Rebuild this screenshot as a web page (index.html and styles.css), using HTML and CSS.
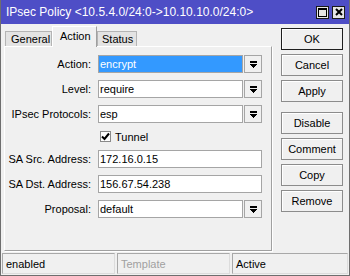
FILE: index.html
```html
<!DOCTYPE html>
<html>
<head>
<meta charset="utf-8">
<link rel="stylesheet" href="styles.css">
</head>
<body>
<div class="win">
  <div class="titlebar">
    <span class="title">IPsec Policy &lt;10.5.4.0/24:0-&gt;10.10.10.0/24:0&gt;</span>
    <div class="tbtns">
      <span class="tbtn"><svg width="9" height="9" viewBox="0 0 9 9" shape-rendering="crispEdges"><path d="M0 0h9v9H0z M1 2v6h7V2z" fill="#000" fill-rule="evenodd"/></svg></span>
      <span class="tbtn"><svg width="8" height="8" viewBox="0 0 8 8"><path d="M1 1L7 7M7 1L1 7" stroke="#000" stroke-width="2"/></svg></span>
    </div>
  </div>
  <div class="main">
    <div class="left">
      <div class="tabs">
        <div class="tab t-general">General</div>
        <div class="tab t-action active">Action</div>
        <div class="tab t-status">Status</div>
      </div>
      <div class="panel">
        <div class="form">
          <div class="lbl">Action:</div>
          <div class="combo"><div class="field sel">encrypt</div><div class="dd"><svg width="7" height="7" viewBox="0 0 7 7" shape-rendering="crispEdges"><path d="M0 0h7v2H0z M0 3h7v1H0z M1 4h5v1H1z M2 5h3v1H2z M3 6h1v1H3z" fill="#000"/></svg></div></div>
          <div class="lbl">Level:</div>
          <div class="combo"><div class="field">require</div><div class="dd"><svg width="7" height="7" viewBox="0 0 7 7" shape-rendering="crispEdges"><path d="M0 0h7v2H0z M0 3h7v1H0z M1 4h5v1H1z M2 5h3v1H2z M3 6h1v1H3z" fill="#000"/></svg></div></div>
          <div class="lbl">IPsec Protocols:</div>
          <div class="combo"><div class="field">esp</div><div class="dd"><svg width="7" height="7" viewBox="0 0 7 7" shape-rendering="crispEdges"><path d="M0 0h7v2H0z M0 3h7v1H0z M1 4h5v1H1z M2 5h3v1H2z M3 6h1v1H3z" fill="#000"/></svg></div></div>
          <div class="lbl"></div>
          <div class="check"><span class="box"><svg width="9" height="9" viewBox="0 0 9 9"><path d="M1 4.5L3.5 7L8 1.5" fill="none" stroke="#000" stroke-width="2"/></svg></span><span>Tunnel</span></div>
          <div class="lbl">SA Src. Address:</div>
          <div class="field">172.16.0.15</div>
          <div class="lbl">SA Dst. Address:</div>
          <div class="field">156.67.54.238</div>
          <div class="lbl">Proposal:</div>
          <div class="combo"><div class="field">default</div><div class="dd"><svg width="7" height="7" viewBox="0 0 7 7" shape-rendering="crispEdges"><path d="M0 0h7v2H0z M0 3h7v1H0z M1 4h5v1H1z M2 5h3v1H2z M3 6h1v1H3z" fill="#000"/></svg></div></div>
        </div>
      </div>
    </div>
    <div class="buttons">
      <div class="btn ok">OK</div>
      <div class="btn">Cancel</div>
      <div class="btn">Apply</div>
      <div class="btn gap">Disable</div>
      <div class="btn">Comment</div>
      <div class="btn">Copy</div>
      <div class="btn">Remove</div>
    </div>
  </div>
  <div class="statusbar">
    <div class="cell c1">enabled</div>
    <div class="cell c2 dim">Template</div>
    <div class="cell c3">Active</div>
  </div>
</div>
</body>
</html>
```

FILE: styles.css
```css
* { box-sizing: border-box; }
html, body { margin: 0; padding: 0; }
body {
  font-family: "Liberation Sans", Arial, sans-serif;
  font-size: 11px;
  color: #000;
  background: #f0f0f0;
}
.win {
  width: 350px;
  height: 276px;
  background: #f0f0f0;
  border: 1px solid #6e6e6e;
  border-top: none;
  display: flex;
  flex-direction: column;
  overflow: hidden;
}
.titlebar {
  height: 24px;
  flex: none;
  margin: 0 -1px;
  background: #4e4ec6;
  color: #fff;
  display: flex;
  align-items: center;
  padding: 0 5px 0 6px;
}
.title {
  flex: 1;
  font-size: 12px;
  white-space: nowrap;
  padding-bottom: 1px;
}
.tbtns { display: flex; gap: 3px; }
.tbtn {
  width: 13px;
  height: 13px;
  background: #e6e6e6;
  border: 1px solid #1a1a1a;
  display: flex;
  align-items: center;
  justify-content: center;
}
.main {
  display: flex;
  height: 227px;
  flex: none;
  padding-left: 3px;
}
.left {
  width: 268px;
  margin-top: 2px;
  display: flex;
  flex-direction: column;
}
.tabs {
  height: 20px;
  display: flex;
  align-items: flex-end;
  padding-left: 1px;
  position: relative;
  z-index: 1;
}
.tab {
  height: 15px;
  background: #e3e3e3;
  border: 1px solid #b4b4b4;
  border-bottom: none;
  display: flex;
  align-items: center;
  padding-left: 5px;
}
.t-general { width: 47px; }
.t-action { width: 45px; }
.t-status { width: 40px; padding-left: 4px; }
.tab.active {
  height: 21px;
  margin-bottom: -1px;
  background: #f0f0f0;
  border-color: #fff #a0a0a0 #f0f0f0 #fff;
  padding-left: 7px;
  padding-bottom: 2px;
}
.panel {
  height: 205px;
  border: 1px solid;
  border-color: #fff #a0a0a0 #a0a0a0 #fff;
  box-shadow: 1px 1px 0 #fff;
  padding-top: 8px;
}
.form {
  display: grid;
  grid-template-columns: 86px 164px;
  grid-template-rows: 18px 18px 18px 13px 18px 18px 18px;
  column-gap: 7px;
  row-gap: 7px;
}
.lbl {
  text-align: right;
  align-self: center;
  white-space: nowrap;
}
.combo { display: flex; gap: 1px; }
.field {
  flex: 1;
  height: 18px;
  background: #fff;
  border: 1px solid #a5a5a5;
  padding-left: 1px;
  display: flex;
  align-items: center;
  white-space: nowrap;
}
.field.sel {
  background: #3399ff;
  color: #fff;
}
.dd {
  width: 18px;
  height: 18px;
  flex: none;
  background: #f0f0f0;
  border: 1px solid #a5a5a5;
  display: flex;
  align-items: center;
  justify-content: center;
}
.check {
  display: flex;
  align-items: center;
  gap: 4px;
  padding-left: 2px;
}
.box {
  width: 11px;
  height: 11px;
  background: #fff;
  border: 1px solid #8a8a8a;
  display: flex;
  align-items: center;
  justify-content: center;
}
.buttons {
  width: 62px;
  margin-left: 9px;
  margin-top: 4px;
  display: flex;
  flex-direction: column;
  gap: 4px;
}
.btn {
  height: 22px;
  flex: none;
  background: #f0f0f0;
  border: 1px solid #8c8c8c;
  box-shadow: inset 1px 1px 0 #fff;
  display: flex;
  align-items: center;
  justify-content: center;
}
.btn.ok { border-color: #1e1e1e; }
.btn.gap { margin-top: 6px; }
.statusbar {
  margin-top: 2px;
  height: 21px;
  display: flex;
  gap: 2px;
  padding: 0 1px;
}
.cell {
  height: 21px;
  border: 1px solid;
  border-color: #a8a8a8 #dcdcdc #dcdcdc #a8a8a8;
  display: flex;
  align-items: center;
  padding-left: 3px;
  white-space: nowrap;
}
.c1 { width: 113px; }
.c2 { width: 113px; }
.c3 { flex: 1; }
.dim { color: #a0a0a0; }
```
